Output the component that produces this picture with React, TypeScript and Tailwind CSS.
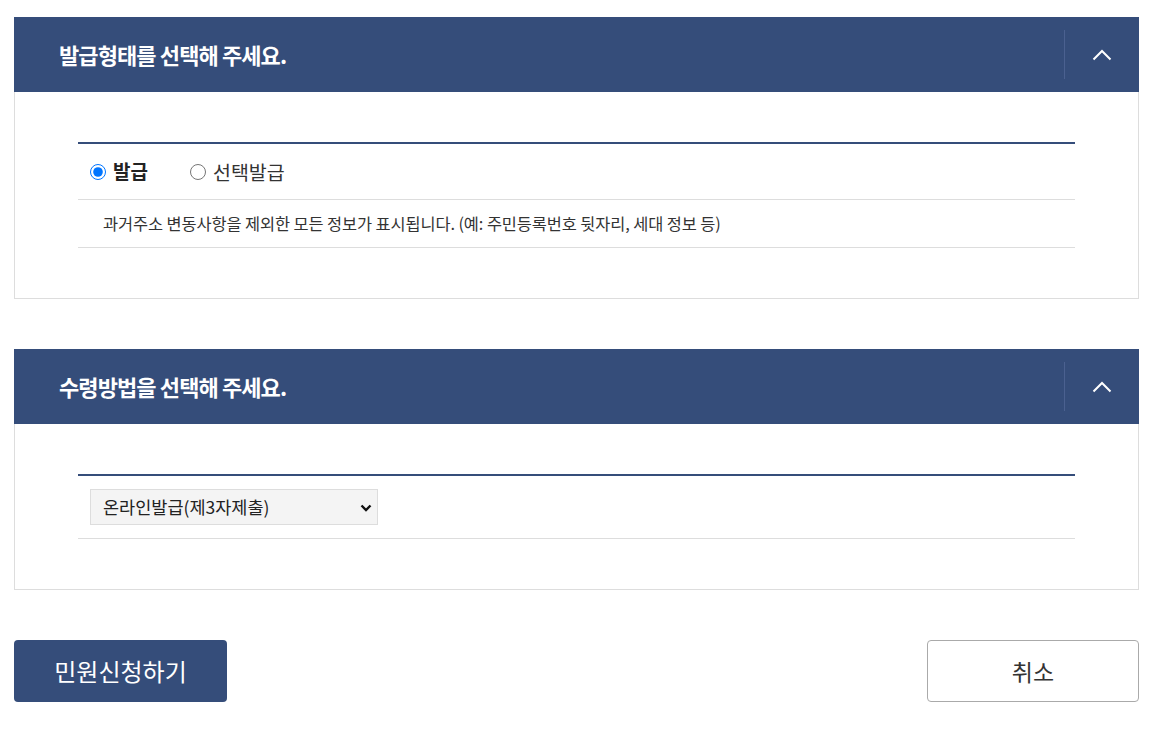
import { useState } from 'react'

const font = { fontFamily: '"Noto Sans CJK KR", "Noto Sans", sans-serif' }

function ChevronUp() {
  return (
    <svg width="20" height="12" viewBox="0 0 20 12" fill="none">
      <path d="M1.5 10.5 L10 2 L18.5 10.5" stroke="white" strokeWidth="2" />
    </svg>
  )
}

function Panel({ title, children }: { title: string; children: React.ReactNode }) {
  return (
    <section>
      <div className="flex h-[75px] items-center bg-[#354d7a]">
        <h2 className="flex-1 pl-[45px] text-[22px] font-bold tracking-[-0.9px] text-white">{title}</h2>
        <div className="h-[49px] w-px bg-[#4b6190]" />
        <button className="flex h-full w-[74px] items-center justify-center">
          <ChevronUp />
        </button>
      </div>
      <div className="border border-t-0 border-[#dddddd] px-[63px] pt-[50px] pb-[50px]">
        <div className="border-t-2 border-[#354d7a]">{children}</div>
      </div>
    </section>
  )
}

export default function App() {
  const [type, setType] = useState('issue')

  return (
    <div className="min-h-screen bg-white px-[14px] pt-[17px] text-[#222]" style={font}>
      <Panel title="발급형태를 선택해 주세요.">
        <div className="flex h-[56px] items-center gap-[42px] border-b border-[#dddddd] pl-[12px]">
          <label className="flex items-center gap-[7px]">
            <input
              type="radio"
              name="type"
              checked={type === 'issue'}
              onChange={() => setType('issue')}
              className="m-0 h-[16px] w-[16px]"
            />
            <span className="text-[19px] font-bold">발급</span>
          </label>
          <label className="flex items-center gap-[7px]">
            <input
              type="radio"
              name="type"
              checked={type === 'select'}
              onChange={() => setType('select')}
              className="m-0 h-[16px] w-[16px]"
            />
            <span className="text-[19.5px] text-[#333]">선택발급</span>
          </label>
        </div>
        <div className="flex h-[48px] items-center border-b border-[#dddddd] pl-[25px] text-[16.4px] tracking-[-0.1px] text-[#333]">
          과거주소 변동사항을 제외한 모든 정보가 표시됩니다. (예: 주민등록번호 뒷자리, 세대 정보 등)
        </div>
      </Panel>

      <div className="h-[50px]" />

      <Panel title="수령방법을 선택해 주세요.">
        <div className="flex h-[63px] items-center border-b border-[#dddddd] pl-[12px]">
          <div className="relative">
            <select className="h-[36px] w-[288px] appearance-none border border-[#dddddd] bg-[#f4f4f4] pl-[12px] text-[17.5px] text-[#222]">
              <option>온라인발급(제3자제출)</option>
              <option>우편수령</option>
              <option>방문수령</option>
            </select>
            <svg
              className="pointer-events-none absolute top-[15px] right-[6px]"
              width="12"
              height="8"
              viewBox="0 0 12 8"
              fill="none"
            >
              <path d="M1.5 1.5 L6 6 L10.5 1.5" stroke="#111" strokeWidth="2.4" />
            </svg>
          </div>
        </div>
      </Panel>

      <div className="mt-[50px] flex justify-between">
        <button className="h-[62px] w-[213px] rounded-[4px] bg-[#354d7a] text-[24px] text-white">민원신청하기</button>
        <button className="h-[62px] w-[212px] rounded-[4px] border border-[#aaaaaa] bg-white text-[23px] text-[#333]">
          취소
        </button>
      </div>
    </div>
  )
}
